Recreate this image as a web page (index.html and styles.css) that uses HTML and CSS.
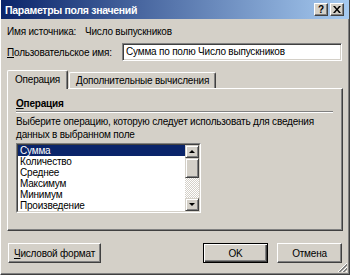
FILE: index.html
```html
<!DOCTYPE html>
<html lang="ru">
<head>
    <meta charset="UTF-8"/>
    <title>Параметры поля значений</title>
    <link rel="stylesheet" href="styles.css">
</head>
<body>
<div class="window">
    <div class="titlebar">
        <span class="title">Параметры поля значений</span>
        <div class="caption-btns">
            <span class="cbtn">?</span>
            <span class="cbtn close">
                <svg width="8" height="7" viewBox="0 0 8 7"><path d="M0 0h2l2 2.5L6 0h2L5 3.5 8 7H6L4 4.5 2 7H0l3-3.5z" fill="#000"/></svg>
            </span>
        </div>
    </div>

    <div class="content">
        <div class="row source">
            <span class="lbl">Имя источника:</span>
            <span>Число выпускников</span>
        </div>
        <div class="row name">
            <label class="lbl-name"><u>П</u>ользовательское имя:</label>
            <div class="textbox">Сумма по полю Число выпускников</div>
        </div>

        <div class="tabs">
            <div class="tab active">Операция</div>
            <div class="tab">Дополнительные вычисления</div>
        </div>
        <div class="panel">
            <div class="group-title"><u>О</u>перация</div>
            <p class="desc">Выберите операцию, которую следует использовать для сведения данных в выбранном поле</p>
            <div class="listbox">
                <div class="listbox-inner">
                    <ul class="items">
                        <li class="sel">Сумма</li>
                        <li>Количество</li>
                        <li>Среднее</li>
                        <li>Максимум</li>
                        <li>Минимум</li>
                        <li>Произведение</li>
                    </ul>
                    <div class="scrollbar">
                        <div class="sbtn"><span class="arrow up"></span></div>
                        <div class="thumb"></div>
                        <div class="track"></div>
                        <div class="sbtn"><span class="arrow down"></span></div>
                    </div>
                </div>
            </div>
        </div>

        <div class="buttons">
            <button class="btn wide"><u>Ч</u>исловой формат</button>
            <div class="spacer"></div>
            <button class="btn default">OK</button>
            <button class="btn">Отмена</button>
        </div>
    </div>

    <svg class="grip" width="11" height="11" viewBox="0 0 11 11">
        <path d="M10 1L1 10M10 5L5 10M10 9L9 10" stroke="#fff" stroke-width="1"/>
        <path d="M10 2L2 10M10 3L3 10M10 6L6 10M10 7L7 10" stroke="#808080" stroke-width="1"/>
    </svg>
</div>
</body>
</html>
```

FILE: styles.css
```css
body{
    margin: 0;
    font-family: 'Liberation Sans', Arial, sans-serif;
    font-size: 10px;
    letter-spacing: -0.2px;
    color: #000;
    background: #d4d0c8;
}

.window{
    position: relative;
    width: 350px;
    height: 275px;
    box-sizing: border-box;
    background: #d4d0c8;
    border-left: 1px solid #fff;
    border-right: 1px solid #404040;
    border-bottom: 1px solid #404040;
    box-shadow: inset -1px -1px #808080;
    display: flex;
    flex-direction: column;
}

.titlebar{
    height: 19px;
    background: linear-gradient(to right, #0a246a, #a6caf0);
    display: flex;
    align-items: center;
    justify-content: space-between;
    padding: 0 5px 0 4px;
    color: #fff;
    font-weight: bold;
    font-size: 10.5px;
    letter-spacing: -0.3px;
}

.caption-btns{
    display: flex;
    gap: 2px;
}

.cbtn{
    width: 14px;
    height: 13px;
    box-sizing: border-box;
    background: #d4d0c8;
    border: 1px solid;
    border-color: #fff #404040 #404040 #fff;
    box-shadow: inset -1px -1px #808080;
    color: #000;
    font-size: 10px;
    line-height: 11px;
    text-align: center;
    display: flex;
    align-items: center;
    justify-content: center;
}

.content{
    padding: 0 6px;
    flex: 1;
    display: flex;
    flex-direction: column;
}

.row{
    display: flex;
    align-items: center;
    height: 18px;
    margin-top: 3px;
}

.lbl{
    width: 78px;
}

.lbl-name{
    width: 115px;
}

.textbox{
    flex: 1;
    height: 18px;
    box-sizing: border-box;
    background: #fff;
    border: 1px solid;
    border-color: #808080 #fff #fff #808080;
    box-shadow: inset 1px 1px #404040, inset -1px -1px #d4d0c8;
    padding-left: 3px;
    line-height: 16px;
    margin-right: 1px;
}

.tabs{
    display: flex;
    align-items: flex-end;
    height: 18px;
    margin-top: 9px;
    position: relative;
    z-index: 1;
}

.tab{
    height: 16px;
    line-height: 16px;
    box-sizing: border-box;
    padding: 0 6px;
    border-top: 1px solid #fff;
    border-left: 1px solid #fff;
    border-right: 1px solid #404040;
    box-shadow: inset -1px 0 #808080;
    border-radius: 2px 2px 0 0;
    margin-left: 1px;
}

.tab.active{
    height: 19px;
    margin-bottom: -1px;
    margin-left: 0;
    width: 61px;
    padding: 0;
    text-align: center;
    background: #d4d0c8;
    line-height: 18px;
}

.panel{
    height: 143px;
    box-sizing: border-box;
    border: 1px solid;
    border-color: #fff #404040 #404040 #fff;
    box-shadow: inset -1px -1px #808080;
    padding: 8px 9px 0 8px;
}

.group-title{
    font-weight: bold;
    line-height: 13px;
    padding-bottom: 1px;
    border-bottom: 1px solid #808080;
    box-shadow: 0 1px #fff;
}

.desc{
    margin: 3px 0 0;
    line-height: 13px;
}

.listbox{
    width: 185px;
    height: 70px;
    box-sizing: border-box;
    margin-top: 2px;
    border: 1px solid;
    border-color: #808080 #fff #fff #808080;
}

.listbox-inner{
    height: 100%;
    box-sizing: border-box;
    border: 1px solid;
    border-color: #404040 #d4d0c8 #d4d0c8 #404040;
    display: flex;
}

.items{
    flex: 1;
    margin: 0;
    padding: 0;
    list-style: none;
    background: #fff;
}

.items li{
    height: 11px;
    line-height: 11px;
    padding-left: 2px;
}

.items li.sel{
    background: #0a246a;
    color: #fff;
}

.scrollbar{
    width: 14px;
    display: flex;
    flex-direction: column;
}

.sbtn, .thumb{
    box-sizing: border-box;
    background: #d4d0c8;
    border: 1px solid;
    border-color: #d4d0c8 #404040 #404040 #d4d0c8;
    box-shadow: inset 1px 1px #fff, inset -1px -1px #808080;
}

.sbtn{
    height: 13px;
    display: flex;
    align-items: center;
    justify-content: center;
}

.thumb{
    height: 20px;
}

.track{
    flex: 1;
    background-color: #d4d0c8;
    background-image: repeating-conic-gradient(#fff 0 25%, #d4d0c8 0 50%);
    background-size: 2px 2px;
}

.arrow{
    width: 0;
    height: 0;
    border-left: 3px solid transparent;
    border-right: 3px solid transparent;
}

.arrow.up{
    border-bottom: 3px solid #000;
}

.arrow.down{
    border-top: 3px solid #000;
}

.buttons{
    display: flex;
    margin-top: 12px;
    gap: 9px;
}

.spacer{
    flex: 1;
}

.btn{
    width: 65px;
    height: 20px;
    box-sizing: border-box;
    background: #d4d0c8;
    border: 1px solid;
    border-color: #fff #404040 #404040 #fff;
    box-shadow: inset -1px -1px #808080;
    font-family: 'Liberation Sans', Arial, sans-serif;
    font-size: 10px;
    letter-spacing: -0.2px;
    color: #000;
    padding: 0;
    margin-right: 1px;
}

.btn.wide{
    width: 93px;
    margin-left: 1px;
}

.btn.default{
    border: 1px solid #000;
    box-shadow: inset 1px 1px #fff, inset -1px -1px #404040, inset -2px -2px #808080;
    margin-right: 0;
}

.grip{
    position: absolute;
    right: 1px;
    bottom: 1px;
}
```
